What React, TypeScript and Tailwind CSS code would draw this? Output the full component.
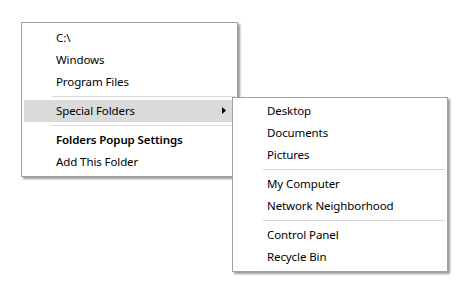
import React from "react";

type Entry = { type: "item"; label: string; bold?: boolean; active?: boolean; arrow?: boolean } | { type: "sep" };

function Menu({ entries, top }: { entries: Entry[]; top: string }) {
  return (
    <div className={"flex flex-col pb-[3px] " + top}>
      {entries.map((e, i) =>
        e.type === "sep" ? (
          <div key={i} className="h-[7px] flex items-center pl-[30px] pr-[2px]">
            <div className="h-px w-full bg-[#d7d7d7]" />
          </div>
        ) : (
          <div
            key={i}
            className={
              "relative h-[22px] mx-[2px] flex items-center pl-[32px] text-[11.5px] tracking-[-0.1px] text-[#000] " +
              (e.active ? "bg-[#dadada]" : "") +
              (e.bold ? " font-semibold" : "")
            }
          >
            <span className="leading-none">{e.label}</span>
            {e.arrow && (
              <svg className="absolute right-[9px] top-[7px]" width="4" height="7" viewBox="0 0 4 7">
                <path d="M0 0 L4 3.5 L0 7 Z" fill="#000" />
              </svg>
            )}
          </div>
        )
      )}
    </div>
  );
}

export default function App() {
  const main: Entry[] = [
    { type: "item", label: "C:\\" },
    { type: "item", label: "Windows" },
    { type: "item", label: "Program Files" },
    { type: "sep" },
    { type: "item", label: "Special Folders", active: true, arrow: true },
    { type: "sep" },
    { type: "item", label: "Folders Popup Settings", bold: true },
    { type: "item", label: "Add This Folder" },
  ];
  const sub: Entry[] = [
    { type: "item", label: "Desktop" },
    { type: "item", label: "Documents" },
    { type: "item", label: "Pictures" },
    { type: "sep" },
    { type: "item", label: "My Computer" },
    { type: "item", label: "Network Neighborhood" },
    { type: "sep" },
    { type: "item", label: "Control Panel" },
    { type: "item", label: "Recycle Bin" },
  ];
  return (
    <div
      className="relative w-[462px] h-[287px] bg-white overflow-hidden"
      style={{ fontFamily: '"Noto Sans", "Open Sans", sans-serif' }}
    >
      <div className="absolute left-[21px] top-[22px] w-[217px] bg-white border border-[#a0a0a0] shadow-[2px_2px_2px_rgba(0,0,0,0.4)]">
        <Menu entries={main} top="pt-[4px]" />
      </div>
      <div className="absolute left-[232px] top-[97px] w-[216px] bg-white border border-[#a0a0a0] shadow-[2px_2px_2px_rgba(0,0,0,0.4)] z-10">
        <Menu entries={sub} top="pt-[2px]" />
      </div>
    </div>
  );
}
